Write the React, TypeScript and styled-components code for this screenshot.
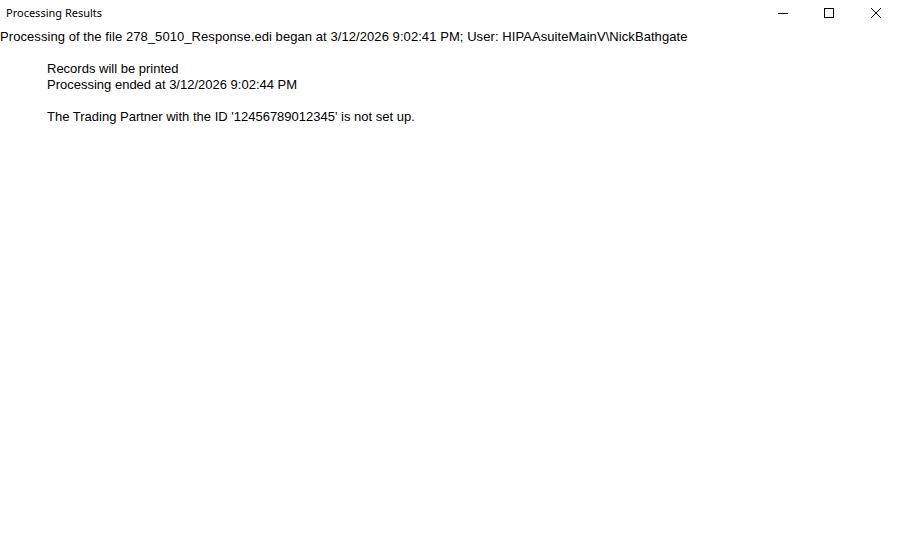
import React from "react";
import styled, { createGlobalStyle } from "styled-components";

const GlobalStyle = createGlobalStyle`
  html, body {
    margin: 0;
    padding: 0;
    background: #ffffff;
  }
  body {
    width: 897px;
    height: 543px;
    overflow: hidden;
  }
`;

const Window = styled.div`
  width: 897px;
  height: 543px;
  display: flex;
  flex-direction: column;
  background: #ffffff;
`;

const TitleBar = styled.div`
  height: 25px;
  display: flex;
  align-items: center;
  justify-content: space-between;
`;

const Title = styled.span`
  padding-left: 6px;
  font-family: "Noto Sans", "Open Sans", sans-serif;
  font-size: 11px;
  color: #000000;
`;

const Controls = styled.div`
  display: flex;
  height: 100%;
  margin-right: -2px;
`;

const ControlButton = styled.div`
  width: 46.5px;
  height: 100%;
  display: flex;
  align-items: center;
  justify-content: center;
`;

const Body = styled.div`
  font-family: "Liberation Sans", Arial, sans-serif;
  font-size: 13px;
  line-height: 16px;
  color: #000000;
`;

const Header = styled.div`
  padding-top: 4px;
  white-space: nowrap;
  letter-spacing: 0.07px;
`;

const Details = styled.div`
  padding: 16px 0 0 47px;
`;

const Line = styled.div<{ $gap?: boolean }>`
  margin-top: ${(p) => (p.$gap ? "16px" : "0")};
  white-space: nowrap;
`;

export default function App() {
  return (
    <Window>
      <GlobalStyle />
      <TitleBar>
        <Title>Processing Results</Title>
        <Controls>
          <ControlButton>
            <svg width="10" height="10" viewBox="0 0 10 10">
              <line x1="0" y1="5.5" x2="10" y2="5.5" stroke="#000" strokeWidth="1" />
            </svg>
          </ControlButton>
          <ControlButton>
            <svg width="10" height="10" viewBox="0 0 10 10">
              <rect x="0.5" y="0.5" width="9" height="9" fill="none" stroke="#000" strokeWidth="1" />
            </svg>
          </ControlButton>
          <ControlButton>
            <svg width="10" height="10" viewBox="0 0 10 10">
              <path d="M0 0 L10 10 M10 0 L0 10" stroke="#000" strokeWidth="1" />
            </svg>
          </ControlButton>
        </Controls>
      </TitleBar>
      <Body>
        <Header>
          Processing of the file 278_5010_Response.edi began at 3/12/2026 9:02:41 PM; User: HIPAAsuiteMainV\NickBathgate
        </Header>
        <Details>
          <Line>Records will be printed</Line>
          <Line>Processing ended at 3/12/2026 9:02:44 PM</Line>
          <Line $gap>The Trading Partner with the ID '12456789012345' is not set up.</Line>
        </Details>
      </Body>
    </Window>
  );
}
